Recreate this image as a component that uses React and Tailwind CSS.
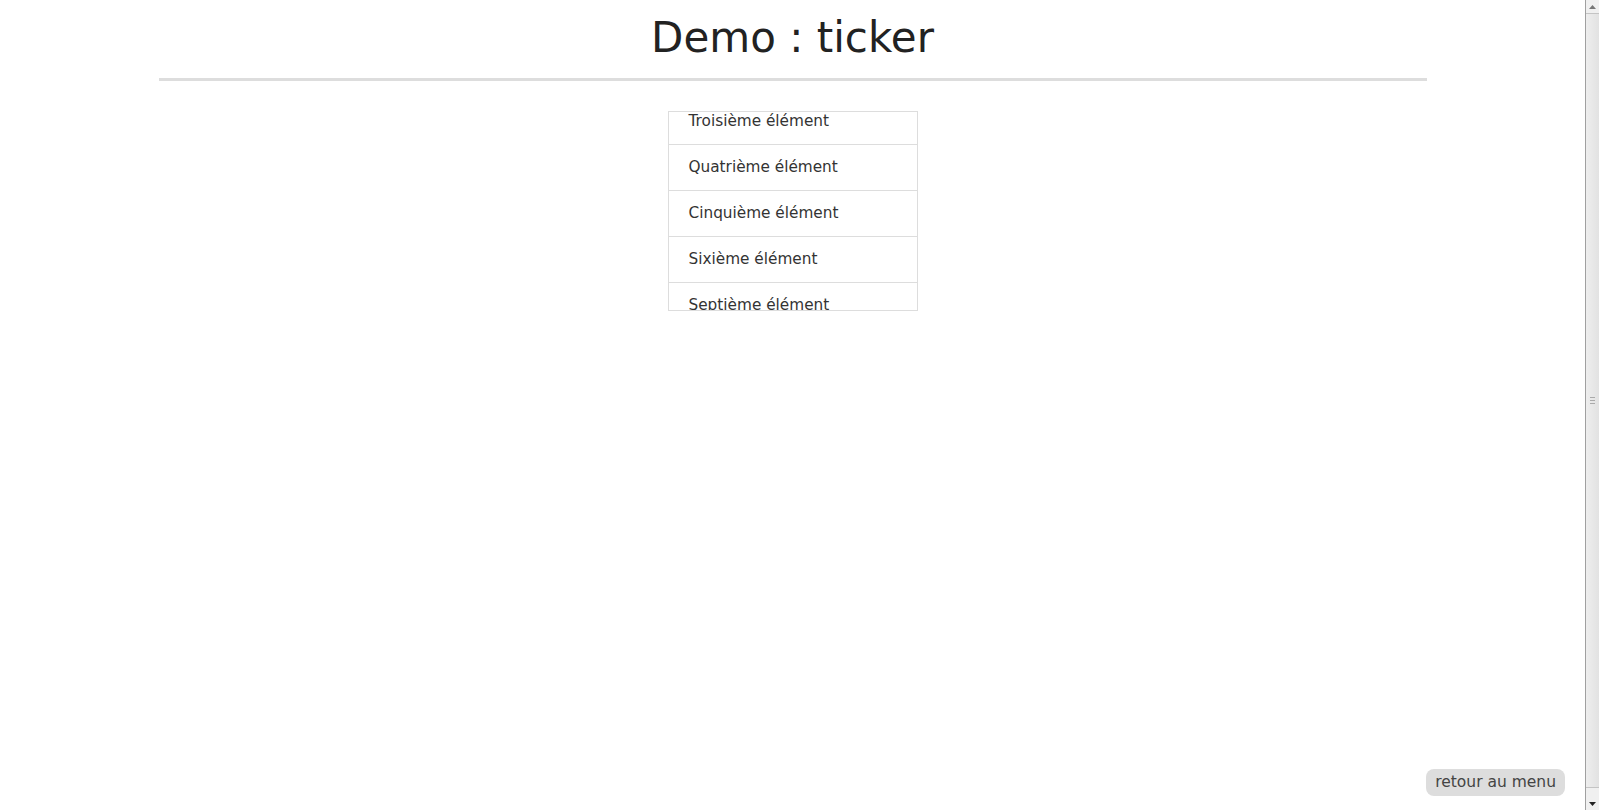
import React from 'react';

const items = [
  'Troisième élément',
  'Quatrième élément',
  'Cinquième élément',
  'Sixième élément',
  'Septième élément',
];

function Scrollbar() {
  return (
    <div className="flex h-full w-[14px] shrink-0 flex-col border-l border-[#a0a0a0] bg-[#f0f0f0]">
      <div className="flex h-[13px] items-center justify-center">
        <svg width="7" height="4" viewBox="0 0 7 4"><path d="M3.5 0 L7 4 L0 4 Z" fill="#777" /></svg>
      </div>
      <div className="flex flex-1 items-center justify-center border-y border-[#c4c4c4] bg-gradient-to-r from-[#eeeeee] to-[#e2e2e2]">
        <div className="flex flex-col gap-[2px]">
          <div className="h-px w-[5px] bg-[#aaa]" />
          <div className="h-px w-[5px] bg-[#aaa]" />
          <div className="h-px w-[5px] bg-[#aaa]" />
        </div>
      </div>
      <div className="flex h-[22px] items-end justify-center pb-[4px]">
        <svg width="7" height="4" viewBox="0 0 7 4"><path d="M0 0 L7 0 L3.5 4 Z" fill="#222" /></svg>
      </div>
    </div>
  );
}

export default function App() {
  return (
    <div className="flex h-[810px] overflow-hidden bg-white font-['DejaVu_Sans',sans-serif] text-[#333]">
      <main className="flex-1">
        <header className="mx-auto w-4/5 border-b-[3px] border-[#ddd] pt-[17px] pb-[19px]">
          <h1 className="text-center text-[42px] leading-[42px] font-normal text-[#222]">Demo : ticker</h1>
        </header>

        <div className="mx-auto mt-[30px] h-[200px] w-[250px] overflow-hidden border border-[#ddd]">
          <ul className="-mt-[13px]">
            {items.map((it) => (
              <li key={it} className="border-b border-[#ddd] px-5 py-[10px] text-[15.3px] leading-[25px]">
                {it}
              </li>
            ))}
          </ul>
        </div>
      </main>

      <Scrollbar />

      <a
        href="#"
        className="fixed right-[34px] bottom-[14px] rounded-lg bg-[#ddd] px-[9px] text-[15.5px] leading-[27px] text-[#444]"
      >
        retour au menu
      </a>
    </div>
  );
}
